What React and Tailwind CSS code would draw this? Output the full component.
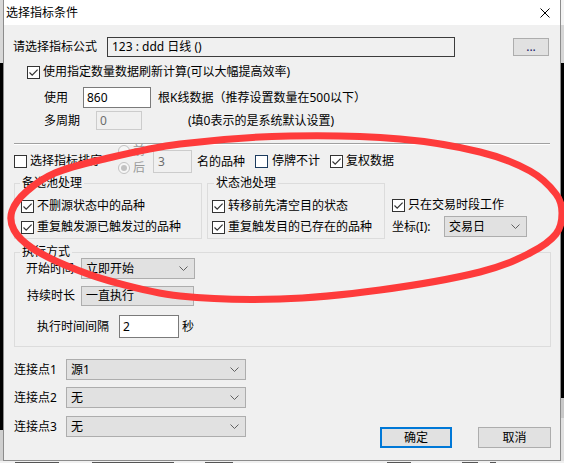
import React from "react";

const FONT = "font-['Noto_Sans','Noto_Sans_CJK_SC',sans-serif]";

// hand-drawn red ring over the dialog
const RING = [
  [100, 160], [180, 144], [290, 136], [400, 139], [480, 152], [530, 171],
  [556, 194], [562, 213], [556, 234], [530, 253], [480, 272], [380, 290],
  [280, 299], [180, 296], [110, 281], [65, 265], [32, 248], [14, 230],
  [12, 211], [27, 191], [55, 173],
];

function smoothPath(pts) {
  const n = pts.length;
  const f = (p) => `${p[0].toFixed(1)},${p[1].toFixed(1)}`;
  let d = `M${f(pts[0])}`;
  for (let i = 0; i < n; i++) {
    const p0 = pts[(i - 1 + n) % n];
    const p1 = pts[i];
    const p2 = pts[(i + 1) % n];
    const p3 = pts[(i + 2) % n];
    const c1 = [p1[0] + (p2[0] - p0[0]) / 6, p1[1] + (p2[1] - p0[1]) / 6];
    const c2 = [p2[0] - (p3[0] - p1[0]) / 6, p2[1] - (p3[1] - p1[1]) / 6];
    d += ` C${f(c1)} ${f(c2)} ${f(p2)}`;
  }
  return d + "Z";
}

function Check({ checked, hover }) {
  return (
    <span
      className={
        hover
          ? "w-[13px] h-[13px] shrink-0 border border-[#1c3b5e] bg-white flex items-center justify-center"
          : "w-[13px] h-[13px] shrink-0 border border-[#333333] bg-white flex items-center justify-center"
      }
    >
      {checked && (
        <svg width="11" height="11" viewBox="0 0 11 11">
          <path d="M1.5 5.5 L4.2 8.2 L9.6 2.6" fill="none" stroke="#333333" strokeWidth="1.2" />
        </svg>
      )}
    </span>
  );
}

function Radio({ on }) {
  return (
    <span className="w-[12px] h-[12px] shrink-0 rounded-full border border-[#c2c2c2] bg-[#f6f6f6] flex items-center justify-center">
      {on && <span className="w-[6px] h-[6px] rounded-full bg-[#c2c2c2]" />}
    </span>
  );
}

function Chevron() {
  return (
    <svg width="9" height="5" viewBox="0 0 9 5" className="shrink-0">
      <path d="M0.5 0.5 L4.5 4.5 L8.5 0.5" fill="none" stroke="#606060" strokeWidth="1" />
    </svg>
  );
}

function Combo({ width, value, arrow = true, h = "h-[21px]" }) {
  return (
    <div
      className={`${h} border border-[#adadad] bg-[#e1e1e1] flex items-center justify-between pl-[4px] pr-[6px] shrink-0`}
      style={{ width }}
    >
      <span>{value}</span>
      {arrow && <Chevron />}
    </div>
  );
}

function Row({ children, className = "" }) {
  return <div className={`flex items-center ${className}`}>{children}</div>;
}

function LeftStrip() {
  return (
    <div className="w-[3px] flex flex-col shrink-0">
      <div className="h-[63px] bg-[#d8d8d8]" />
      <div className="flex-1 bg-black" />
      <div className="h-[31px] bg-[#cfcfcf]" />
    </div>
  );
}

function RightStrip() {
  return (
    <div className="w-[3px] flex flex-col shrink-0">
      <div className="h-[25px] bg-[#f3f3f3]" />
      <div className="h-[38px] bg-[#d6d6d6]" />
      <div className="flex-1 bg-black" />
      <div className="h-[20px] bg-[#c8c8c8]" />
      <div className="h-[43px] bg-[#e0e0e0]" />
    </div>
  );
}

// only the tops of the table row behind the dialog peek out
const PEEK = [
  [15, 44], [92, 82], [205, 28], [387, 24], [462, 16], [490, 6],
];

export default function App() {
  return (
    <div className={`w-[564px] h-[463px] relative overflow-hidden bg-[#f0f0f0] text-[12px] leading-[16px] text-black ${FONT}`}>
      <div className="flex h-[461px]">
        <LeftStrip />
        <div className="w-[558px] border border-t-0 border-[#8c8c8c] bg-[#f0f0f0] flex flex-col">
          {/* title bar */}
          <div className="h-[25px] bg-white flex items-center justify-between pl-[2px] pr-[10px] shrink-0">
            <span>选择指标条件</span>
            <svg width="10" height="10" viewBox="0 0 10 10">
              <path d="M0.5 0.5 L9.5 9.5 M9.5 0.5 L0.5 9.5" stroke="#000" strokeWidth="1" />
            </svg>
          </div>

          <Row className="mt-[12px] h-[20px]">
            <span className="ml-[9px] w-[94px]">请选择指标公式</span>
            <div className="w-[348px] h-[20px] border border-[#3c3c3c] bg-[#f0f0f0] flex items-center pl-[4px]">
              123 : ddd 日线 ()
            </div>
            <div className="ml-[58px] w-[36px] h-[18px] border border-[#adadad] bg-[#e1e1e1] flex items-center justify-center text-[#1a1a6a]">
              ...
            </div>
          </Row>

          <Row className="mt-[6px] h-[18px]">
            <span className="ml-[23px]">
              <Check checked />
            </span>
            <span className="ml-[3px]">使用指定数量数据刷新计算(可以大幅提高效率)</span>
          </Row>

          <Row className="mt-[6px] h-[21px]">
            <span className="ml-[40px] w-[39px]">使用</span>
            <div className="w-[68px] h-[21px] border border-[#7a7a7a] bg-white flex items-center pl-[3px]">860</div>
            <span className="ml-[7px]">根K线数据（推荐设置数量在500以下）</span>
          </Row>

          <Row className="mt-[3px] h-[19px]">
            <span className="ml-[40px] w-[52px]">多周期</span>
            <div className="w-[46px] h-[19px] border border-[#cccccc] bg-[#f0f0f0] flex items-center pl-[3px] text-[#6d6d6d]">0</div>
            <span className="ml-[46px]">(填0表示的是系统默认设置)</span>
          </Row>

          <div className="mt-[13px] ml-[10px] w-[536px] border-t border-b border-t-[#a0a0a0] border-b-white" />

          {/* sort row */}
          <div className="flex items-start h-[29px]">
            <span className="ml-[10px] mt-[10px]">
              <Check />
            </span>
            <span className="ml-[3px] mt-[8px]">选择指标排序</span>
            <div className="ml-[16px] flex flex-col gap-[5px] text-[#9a9a9a]">
              <div className="h-[12px] flex items-center gap-[3px]">
                <Radio />
                <span>前</span>
              </div>
              <div className="h-[12px] flex items-center gap-[3px]">
                <Radio on />
                <span>后</span>
              </div>
            </div>
            <div className="ml-[8px] mt-[5px] w-[39px] h-[23px] border border-[#cccccc] bg-[#f0f0f0] flex items-center pl-[4px] text-[#6d6d6d]">
              3
            </div>
            <span className="ml-[5px] mt-[9px]">名的品种</span>
            <span className="ml-[10px] mt-[10px]">
              <Check hover />
            </span>
            <span className="ml-[4px] mt-[8px]">停牌不计</span>
            <span className="ml-[10px] mt-[10px]">
              <Check checked />
            </span>
            <span className="ml-[3px] mt-[8px]">复权数据</span>
          </div>

          {/* pool groups */}
          <div className="mt-[3px] flex items-start">
            <fieldset className="ml-[10px] w-[188px] border border-[#dcdcdc] pb-[3px] pl-[6px]">
              <legend className="ml-[-1px] px-[2px] leading-[12px]">备选池处理</legend>
              <Row className="mt-[9px] h-[16px]">
                <Check checked />
                <span className="ml-[3px]">不删源状态中的品种</span>
              </Row>
              <Row className="mt-[5px] h-[16px]">
                <Check checked />
                <span className="ml-[3px]">重复触发源已触发过的品种</span>
              </Row>
            </fieldset>
            <fieldset className="ml-[5px] w-[178px] border border-[#dcdcdc] pb-[3px] pl-[4px]">
              <legend className="ml-[2px] px-[2px] leading-[12px]">状态池处理</legend>
              <Row className="mt-[9px] h-[16px]">
                <Check checked />
                <span className="ml-[3px]">转移前先清空目的状态</span>
              </Row>
              <Row className="mt-[5px] h-[16px]">
                <Check checked />
                <span className="ml-[3px]">重复触发目的已存在的品种</span>
              </Row>
            </fieldset>
            <div className="ml-[7px] flex flex-col">
              <Row className="mt-[20px] h-[16px]">
                <Check checked />
                <span className="ml-[3px]">只在交易时段工作</span>
              </Row>
              <Row className="mt-[3px] h-[21px]">
                <span className="w-[52px]">坐标(I):</span>
                <Combo width={83} value="交易日" />
              </Row>
            </div>
          </div>

          {/* run mode */}
          <fieldset className="mt-[7px] ml-[10px] w-[537px] border border-[#dcdcdc] pb-[8px]">
            <legend className="ml-[5px] px-[2px] leading-[12px]">执行方式</legend>
            <Row className="h-[21px] pl-[11px]">
              <span className="w-[55px]">开始时间</span>
              <Combo width={114} value="立即开始" />
            </Row>
            <Row className="mt-[7px] h-[20px] pl-[12px]">
              <span className="w-[54px]">持续时长</span>
              <Combo width={113} value="一直执行" arrow={false} h="h-[20px]" />
            </Row>
            <Row className="mt-[9px] h-[23px] pl-[22px]">
              <span className="w-[82px]">执行时间间隔</span>
              <div className="w-[60px] h-[23px] border border-[#7a7a7a] bg-white flex items-center pl-[3px]">2</div>
              <span className="ml-[3px]">秒</span>
            </Row>
          </fieldset>

          {/* links + buttons */}
          <div className="mt-[12px] flex items-start">
            <div className="ml-[10px] flex flex-col">
              <Row className="h-[21px]">
                <span className="w-[52px]">连接点1</span>
                <Combo width={180} value="源1" />
              </Row>
              <Row className="mt-[7px] h-[21px]">
                <span className="w-[52px]">连接点2</span>
                <Combo width={180} value="无" />
              </Row>
              <Row className="mt-[8px] h-[21px]">
                <span className="w-[52px]">连接点3</span>
                <Combo width={180} value="无" />
              </Row>
            </div>
            <div className="ml-auto mr-[9px] mt-[68px] flex">
              <div className="w-[72px] h-[21px] border-2 border-[#0078d7] bg-[#e1e1e1] flex items-center justify-center">
                确定
              </div>
              <div className="ml-[26px] w-[73px] h-[21px] border border-[#adadad] bg-[#e1e1e1] flex items-center justify-center">
                取消
              </div>
            </div>
          </div>
        </div>
        <RightStrip />
      </div>

      {/* bottom edge of the app behind the dialog */}
      <div className="h-[2px] flex">
        {PEEK.map(([x, w], i) => (
          <div
            key={i}
            className="h-[1px] mt-[1px] bg-[#555555] shrink-0"
            style={{ marginLeft: i === 0 ? x : x - PEEK[i - 1][0] - PEEK[i - 1][1], width: w }}
          />
        ))}
      </div>

      <svg
        className="absolute left-0 top-0 pointer-events-none"
        width="564"
        height="463"
        viewBox="0 0 564 463"
      >
        <path d={smoothPath(RING)} fill="none" stroke="#fe3b3b" strokeWidth="7" strokeLinejoin="round" />
      </svg>
    </div>
  );
}
